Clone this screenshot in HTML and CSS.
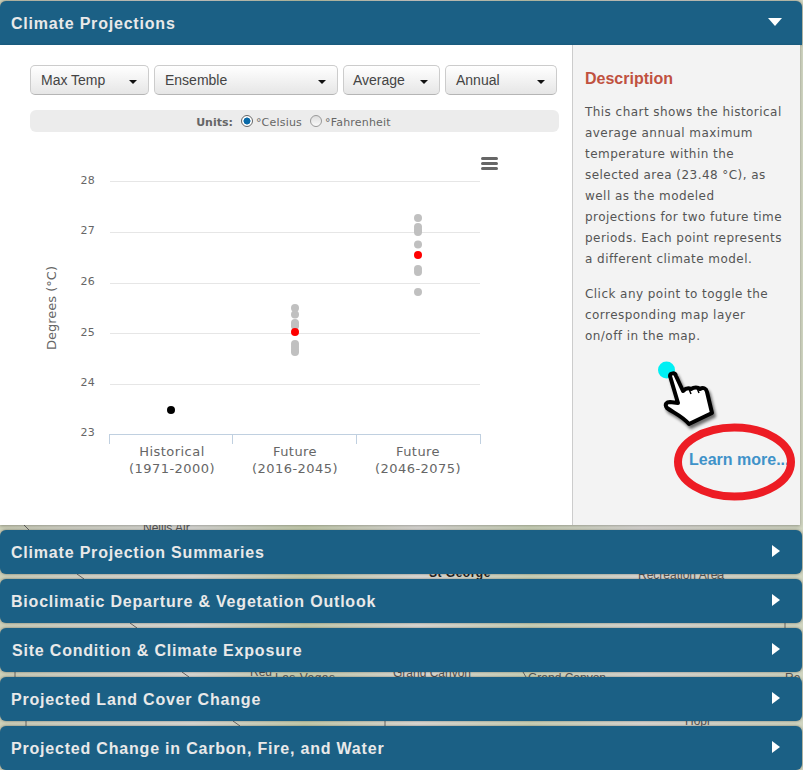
FILE: index.html
```html
<!DOCTYPE html>
<html lang="en">
<head>
<meta charset="utf-8">
<title>Climate Projections</title>
<link rel="stylesheet" href="styles.css">
</head>
<body>
<div class="map" aria-hidden="true">
  <svg class="roads" width="803" height="770" viewBox="0 0 803 770">
    <path d="M24 525 L30 531 M77 574 L84 579 M130 623 L137 628 M182 672 L189 677 M233 721 L240 726 M15 672 V677 M26 721 V726 M385 721 V726 M523 672 L526 677 M718 574 V579 M785 623 V628"/>
  </svg>
  <span class="place p1">Nellis Air</span>
  <span class="place p2">St George</span>
  <span class="place p3">Recreation Area</span>
  <span class="place p4">Las Vegas</span>
  <span class="place p5">Grand Canyon</span>
  <span class="place p6">Grand Canyon</span>
  <span class="place p7">Hopi</span>
  <span class="place p8">Red</span>
  <span class="place p9">Re</span>
</div>
<main class="accordion">
  <section class="panel">
    <header class="bar">
      <h2 class="bar-title">Climate Projections</h2>
      <span class="tri-down"></span>
    </header>
    <div class="panel-body">
      <div class="main-col">
        <div class="controls">
          <button class="select w-temp"><span>Max Temp</span><i class="caret"></i></button>
          <button class="select w-ens"><span>Ensemble</span><i class="caret"></i></button>
          <button class="select w-avg"><span>Average</span><i class="caret"></i></button>
          <button class="select w-ann"><span>Annual</span><i class="caret"></i></button>
        </div>
        <div class="units">
          <b>Units:</b>
          <label class="unit"><i class="radio on"></i>°Celsius</label>
          <label class="unit"><i class="radio"></i>°Fahrenheit</label>
        </div>
        <svg class="chart" width="480" height="355" viewBox="30 140 480 355">
          <g class="grid">
            <line x1="110" x2="480" y1="181.5" y2="181.5"/>
            <line x1="110" x2="480" y1="232.5" y2="232.5"/>
            <line x1="110" x2="480" y1="283.5" y2="283.5"/>
            <line x1="110" x2="480" y1="333.5" y2="333.5"/>
            <line x1="110" x2="480" y1="384.5" y2="384.5"/>
          </g>
          <g class="axis">
            <line x1="109.500" x2="480.500" y1="434.500" y2="434.500"/>
            <line x1="109.500" x2="109.500" y1="434" y2="444"/>
            <line x1="232.500" x2="232.500" y1="434" y2="444"/>
            <line x1="356.500" x2="356.500" y1="434" y2="444"/>
            <line x1="480.500" x2="480.500" y1="434" y2="444"/>
          </g>
          <g class="ylabels">
            <text x="95" y="184">28</text>
            <text x="95" y="234">27</text>
            <text x="95" y="285">26</text>
            <text x="95" y="336">25</text>
            <text x="95" y="386">24</text>
            <text x="95" y="436">23</text>
          </g>
          <text class="ytitle" transform="translate(56 308) rotate(-90)">Degrees (°C)</text>
          <g class="xlabels">
            <text x="172" y="456">Historical</text>
            <text x="172" y="473">(1971-2000)</text>
            <text x="295" y="456">Future</text>
            <text x="295" y="473">(2016-2045)</text>
            <text x="418" y="456">Future</text>
            <text x="418" y="473">(2046-2075)</text>
          </g>
          <g class="pts-grey">
            <circle cx="295" cy="308" r="4"/><circle cx="295" cy="314.500" r="4"/>
            <circle cx="295" cy="323" r="4"/><circle cx="295" cy="326" r="4"/>
            <circle cx="295" cy="344" r="4"/><circle cx="295" cy="347" r="4"/><circle cx="295" cy="350" r="4"/><circle cx="295" cy="352" r="4"/>
            <circle cx="418" cy="218" r="4"/><circle cx="418" cy="227" r="4"/><circle cx="418" cy="230" r="4"/><circle cx="418" cy="232" r="4"/>
            <circle cx="418" cy="244.500" r="4"/>
            <circle cx="418" cy="269" r="4"/><circle cx="418" cy="272" r="4"/>
            <circle cx="418" cy="292" r="4"/>
          </g>
          <circle class="pt-red" cx="295" cy="332" r="4"/>
          <circle class="pt-red" cx="418" cy="255" r="4"/>
          <circle class="pt-black" cx="171" cy="410" r="4"/>
          <g class="menu-icon">
            <rect x="481" y="157" width="17" height="3" rx="1.500"/>
            <rect x="481" y="162" width="17" height="3" rx="1.500"/>
            <rect x="481" y="167" width="17" height="3" rx="1.500"/>
          </g>
        </svg>
      </div>
      <aside class="side">
        <h3 class="side-title">Description</h3>
        <p class="side-text">This chart shows the historical average annual maximum temperature within the selected area (23.48 °C), as well as the modeled projections for two future time periods. Each point represents a different climate model.</p>
        <p class="side-text">Click any point to toggle the corresponding map layer on/off in the map.</p>
        <a class="learn" href="#">Learn more...</a>
        <svg class="callout" width="230" height="170" viewBox="573 350 230 170">
          <ellipse class="ring" cx="734.500" cy="462" rx="56.500" ry="34.500"/>
          <circle class="dot" cx="666.500" cy="370" r="8.500"/>
          <path class="hand hand-shadow" d="M670 376 C670 373 675 372 676 376 L683 391 C686 388 689 388 691 389 C694 387 698 387 700 389 C703 387 706 388 707 392 L712 413 L689 424 C682 416 674 413 667 408 C664 404 667 402 670 402 L678 403 Z"/>
          <path class="hand" d="M670 376 C670 373 675 372 676 376 L683 391 C686 388 689 388 691 389 C694 387 698 387 700 389 C703 387 706 388 707 392 L712 413 L689 424 C682 416 674 413 667 408 C664 404 667 402 670 402 L678 403 Z"/>
          <path class="hand-line" d="M689 389 L691 394 M697 388 L699 393"/>
        </svg>
      </aside>
    </div>
  </section>
  <section class="bar bar-gap"><h2 class="bar-title">Climate Projection Summaries</h2><span class="tri-right"></span></section>
  <section class="bar bar-gap"><h2 class="bar-title">Bioclimatic Departure &amp; Vegetation Outlook</h2><span class="tri-right"></span></section>
  <section class="bar bar-gap"><h2 class="bar-title nudge">Site Condition &amp; Climate Exposure</h2><span class="tri-right"></span></section>
  <section class="bar bar-gap"><h2 class="bar-title">Projected Land Cover Change</h2><span class="tri-right"></span></section>
  <section class="bar bar-gap"><h2 class="bar-title">Projected Change in Carbon, Fire, and Water</h2><span class="tri-right"></span></section>
</main>
</body>
</html>
```
FILE: styles.css
```css
* { box-sizing: border-box; }
html, body { margin: 0; height: 770px; overflow: hidden; }
body { position: relative; font-family: "Liberation Sans", Arial, sans-serif; background: #d8d8d2; }

.map {
  position: absolute; inset: 0;
  background:
    linear-gradient(90deg, #cdd0b8 0, #d4d5c8 8%, #dcdcd8 24%, #c8d0b0 38%, #dedcd8 52%, #cdd5ba 66%, #dcdad6 80%, #d0d5c0 100%);
}
.roads { position: absolute; left: 0; top: 0; }
.roads path { fill: none; stroke: #666; stroke-width: 1; }
.place { position: absolute; font-size: 12px; line-height: 14px; color: #555; white-space: nowrap; }
.p1 { left: 143px; top: 521px; }
.p2 { left: 429px; top: 566px; color: #222; font-weight: bold; letter-spacing: .5px; }
.p3 { left: 638px; top: 568px; }
.p4 { left: 275px; top: 671px; letter-spacing: .5px; }
.p5 { left: 393px; top: 666px; }
.p6 { left: 528px; top: 671px; }
.p7 { left: 685px; top: 714px; }
.p8 { left: 250px; top: 665px; }
.p9 { left: 785px; top: 671px; }

.accordion { position: relative; width: 802px; padding-top: 1px; display: flex; flex-direction: column; gap: 5px; }

.bar {
  height: 44px; display: flex; align-items: center; justify-content: space-between;
  padding: 0 20px 0 11px; background: #1b6085; border-radius: 6px;
  box-shadow: 0 0 3px rgba(0,0,0,.45); flex: none;
}
.panel .bar { border-radius: 6px 6px 0 0; }
.bar-title { margin: 2px 0 0; font-size: 16px; line-height: 20px; font-weight: bold; letter-spacing: .8px; color: #e9e9e9; }
.nudge { margin-left: 1px; }
.tri-down { width: 0; height: 0; border: solid transparent; border-width: 8px 7px 0; border-top-color: #fff; margin-top: -3px; }
.tri-right { width: 0; height: 0; border: solid transparent; border-width: 6.500px 0 6.500px 8px; border-left-color: #fff; margin: -3px 2px 0 0; }

.panel-body { display: flex; width: 800px; height: 480px; background: #fff; box-shadow: 0 1px 3px rgba(0,0,0,.3); }
.main-col { width: 572px; flex: none; padding: 20px 0 0 30px; }
.controls { display: flex; gap: 5px; width: 528px; }
.select {
  height: 30px; display: flex; align-items: center; justify-content: space-between; padding: 0 11px 0 10px;
  font: 14px "Liberation Sans", Arial, sans-serif; color: #444;
  background: linear-gradient(#fff, #e6e6e6); border: 1px solid #ccc; border-bottom-color: #b5b5b5; border-radius: 5px;
}
.w-temp { width: 119px; }
.w-ens { width: 184px; }
.w-avg { width: 97px; padding-left: 9px; }
.w-ann { width: 112px; }
.caret { width: 0; height: 0; border: solid transparent; border-width: 4px 4px 0; border-top-color: #111; margin-top: 3px; }

.units {
  margin-top: 15px; width: 529px; height: 22px; border-radius: 6px; background: #ececec;
  display: flex; align-items: center; justify-content: center; gap: 8px; padding: 2px 2px 0 0;
  font: 11px "DejaVu Sans", Verdana, sans-serif; color: #666;
}
.units b { color: #666; }
.unit { display: flex; align-items: center; gap: 3px; letter-spacing: .2px; }
.radio { width: 12px; height: 12px; border-radius: 50%; border: 1px solid #999; background: linear-gradient(#ddd, #fafafa); margin-top: -3px; }
.radio.on { background: radial-gradient(circle, #0a6aa8 0 3.200px, #fff 3.800px); border-color: #666; }

.chart { display: block; margin-top: 8px; }
.grid line { stroke: #e6e6e6; stroke-width: 1; }
.axis line { stroke: #c0d0e0; stroke-width: 1; }
.ylabels text { font: 11px "DejaVu Sans", Verdana, sans-serif; fill: #666; text-anchor: end; letter-spacing: .2px; }
.ytitle { font: 13px "DejaVu Sans", Verdana, sans-serif; fill: #666; text-anchor: middle; }
.xlabels text { font: 13px "DejaVu Sans", Verdana, sans-serif; fill: #666; text-anchor: middle; letter-spacing: .45px; }
.pts-grey circle { fill: #c0c0c0; }
.pt-red { fill: #f00; }
.pt-black { fill: #000; }
.menu-icon rect { fill: #666; }

.side { position: relative; flex: 1; background: #f3f3f3; border-left: 1px solid #ccc; padding: 24px 12px 0; }
.side-title { margin: 0 0 13px; font: bold 16px/20px "Liberation Sans", Arial, sans-serif; color: #c0513f; }
.side-text { margin: 0 0 14px; font: 12px/21px "DejaVu Sans", Verdana, sans-serif; letter-spacing: .45px; color: #555; width: 201px; }
.learn { position: absolute; left: 116px; top: 405px; font: bold 16px/20px "Liberation Sans", Arial, sans-serif; color: #3f92c9; text-decoration: none; white-space: nowrap; }
.callout { position: absolute; left: 0; top: 305px; overflow: visible; pointer-events: none; }
.ring { fill: none; stroke: #ed1c24; stroke-width: 8; }
.dot { fill: #00f0f4; }
.hand { fill: #fff; stroke: #000; stroke-width: 4; stroke-linejoin: round; }
.hand-shadow { fill: #000; transform: translate(2px, 3px); opacity: .55; filter: blur(1.500px); }
.hand-line { fill: none; stroke: #000; stroke-width: 1.500; }
```
